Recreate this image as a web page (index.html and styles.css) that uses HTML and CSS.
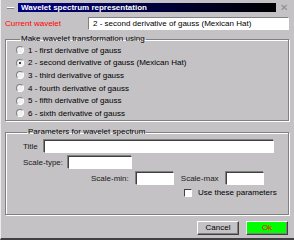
FILE: index.html
```html
<!DOCTYPE html>
<html lang="en">
<head>
    <meta charset="UTF-8">
    <title>Wavelet spectrum representation</title>
    <link rel="stylesheet" href="styles.css">
</head>
<body>
    <div class="window">
        <div class="titlebar">
            <span class="sysmenu"></span>
            <div class="caption">Wavelet spectrum representation</div>
            <span class="close">✕</span>
        </div>

        <div class="current-row">
            <span class="current-label">Current wavelet</span>
            <div class="current-value">2 - second derivative of gauss (Mexican Hat)</div>
        </div>

        <fieldset class="group choices">
            <legend>Make wavelet transformation using</legend>
            <div class="radio"><span class="dot"></span>1 - first derivative of gauss</div>
            <div class="radio"><span class="dot checked"></span>2 - second derivative of gauss (Mexican Hat)</div>
            <div class="radio"><span class="dot"></span>3 - third derivative of gauss</div>
            <div class="radio"><span class="dot"></span>4 - fourth derivative of gauss</div>
            <div class="radio"><span class="dot"></span>5 - fifth derivative of gauss</div>
            <div class="radio"><span class="dot"></span>6 - sixth derivative of gauss</div>
        </fieldset>

        <fieldset class="group params">
            <legend>Parameters for wavelet spectrum</legend>
            <div class="field-row">
                <span class="lbl title-lbl">Title</span>
                <div class="field title-field"></div>
            </div>
            <div class="field-row">
                <span class="lbl">Scale-type:</span>
                <div class="field type-field"></div>
            </div>
            <div class="field-row range-row">
                <span class="lbl">Scale-min:</span>
                <div class="field small-field"></div>
                <span class="lbl max-lbl">Scale-max</span>
                <div class="field small-field"></div>
            </div>
            <div class="check-row">
                <span class="box"></span>Use these parameters
            </div>
        </fieldset>

        <div class="buttons">
            <div class="btn">Cancel</div>
            <div class="btn ok">Ok</div>
        </div>
    </div>
</body>
</html>
```

FILE: styles.css
```css
body {
    margin: 0;
    font-family: "Liberation Sans", Arial, sans-serif;
    font-size: 8px;
}
.window {
    width: 294px;
    height: 240px;
    box-sizing: border-box;
    background-color: #c4c2c4;
    border-left: 1px solid #ececec;
    border-bottom: 2px solid #404040;
    padding: 3px 5px 0 4px;
    display: flex;
    flex-direction: column;
}
.titlebar {
    display: flex;
    align-items: center;
    height: 9px;
}
.sysmenu {
    width: 7px;
    height: 1px;
    background-color: #808080;
    border-top: 1px solid #fff;
    margin: 0 4px 0 2px;
}
.caption {
    flex: 1;
    height: 9px;
    line-height: 9px;
    padding-left: 3px;
    background: linear-gradient(to right, #000080, #000000);
    color: white;
    font-weight: bold;
}
.close {
    width: 9px;
    margin-left: 4px;
    color: #8c8c8c;
    font-size: 10px;
    line-height: 9px;
}
.current-row {
    display: flex;
    align-items: center;
    margin-top: 5px;
    height: 13px;
}
.current-label {
    color: #ff0000;
    width: 83px;
}
.current-value {
    flex: 1;
    height: 13px;
    line-height: 12px;
    box-sizing: border-box;
    background-color: white;
    border: 1px solid;
    border-color: #808080 #fff #fff #808080;
    padding-left: 4px;
}
.group {
    margin: 0;
    padding: 0;
    min-width: 0;
    border: 1px solid #808080;
    box-shadow: inset 1px 1px 0 #fff, 1px 1px 0 #fff;
}
.group legend {
    padding: 0 1px;
    margin-left: 4px;
    line-height: 8px;
}
.choices {
    margin-top: 5px;
    height: 83px;
    padding: 1px 0 0 10px;
}
.radio {
    display: flex;
    align-items: center;
    height: 12.6px;
}
.dot {
    width: 8px;
    height: 8px;
    box-sizing: border-box;
    border-radius: 50%;
    border: 1px solid;
    border-color: #808080 #fff #fff #808080;
    background-color: #f0f0f0;
    margin-right: 4px;
    display: flex;
    align-items: center;
    justify-content: center;
}
.dot.checked::after {
    content: "";
    width: 2px;
    height: 2px;
    background-color: black;
    border-radius: 50%;
}
.params {
    margin-top: 7px;
    height: 81px;
    padding: 4px 0 0 17px;
}
.field-row {
    display: flex;
    align-items: center;
    height: 13px;
    margin-bottom: 3px;
}
.lbl {
    color: #202020;
}
.title-lbl {
    width: 21px;
}
.field {
    height: 13px;
    box-sizing: border-box;
    background-color: white;
    border: 1px solid;
    border-color: #404040 #fff #fff #404040;
    box-shadow: -1px -1px 0 #808080;
}
.title-field {
    width: 230px;
}
.type-field {
    width: 64px;
    margin-left: 5px;
}
.range-row {
    padding-left: 68px;
}
.small-field {
    width: 38px;
    margin-left: 7px;
}
.max-lbl {
    margin-left: 7px;
}
.check-row {
    display: flex;
    align-items: center;
    padding-left: 161px;
    margin-top: 3px;
}
.box {
    width: 8px;
    height: 8px;
    box-sizing: border-box;
    background-color: white;
    border: 1px solid;
    border-color: #404040 #fff #fff #404040;
    margin-right: 6px;
}
.buttons {
    display: flex;
    justify-content: flex-end;
    gap: 7px;
    margin-top: 6px;
    padding-right: 1px;
}
.btn {
    width: 42px;
    height: 14px;
    line-height: 12px;
    box-sizing: border-box;
    text-align: center;
    border: 1px solid;
    border-color: #fff #404040 #404040 #fff;
    box-shadow: inset -1px -1px 0 #808080;
}
.ok {
    background-color: #00ff00;
    color: #ff0000;
}
```
